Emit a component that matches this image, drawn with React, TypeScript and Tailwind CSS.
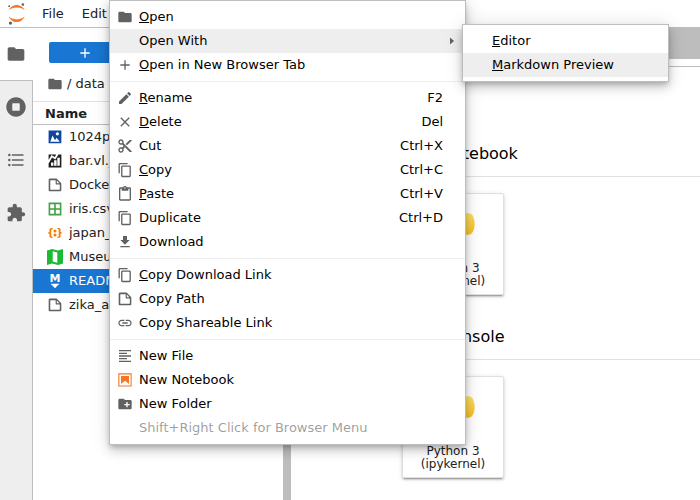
import type { ReactNode } from 'react';

const paths = {
  folder: 'M10 4H4c-1.1 0-1.99.9-1.99 2L2 18c0 1.1.9 2 2 2h16c1.1 0 2-.9 2-2V8c0-1.1-.9-2-2-2h-8l-2-2z',
  add: 'M19 13h-6v6h-2v-6H5v-2h6V5h2v6h6v2z',
  edit: 'M3 17.25V21h3.75L17.81 9.94l-3.75-3.75L3 17.25zM20.71 7.04c.39-.39.39-1.02 0-1.41l-2.34-2.34c-.39-.39-1.02-.39-1.41 0l-1.83 1.83 3.75 3.75 1.83-1.83z',
  close: 'M19 6.41L17.59 5 12 10.59 6.41 5 5 6.41 10.59 12 5 17.59 6.41 19 12 13.41 17.59 19 19 17.59 13.41 12z',
  cut: 'M9.64 7.64c.23-.5.36-1.05.36-1.64 0-2.21-1.79-4-4-4S2 3.79 2 6s1.79 4 4 4c.59 0 1.14-.13 1.64-.36L10 12l-2.36 2.36C7.14 14.13 6.59 14 6 14c-2.21 0-4 1.79-4 4s1.79 4 4 4 4-1.79 4-4c0-.59-.13-1.14-.36-1.64L12 14l7 7h3v-1L9.64 7.64zM6 8c-1.1 0-2-.89-2-2s.9-2 2-2 2 .89 2 2-.9 2-2 2zm0 12c-1.1 0-2-.89-2-2s.9-2 2-2 2 .89 2 2-.9 2-2 2zm6-7.5c-.28 0-.5-.22-.5-.5s.22-.5.5-.5.5.22.5.5-.22.5-.5.5zM19 3l-6 6 2 2 7-7V3z',
  copy: 'M11.9,1H3.2C2.4,1,1.7,1.7,1.7,2.5v10.2h1.5V2.5h8.7V1z M14.1,3.9h-8c-0.8,0-1.5,0.7-1.5,1.5v10.2c0,0.8,0.7,1.5,1.5,1.5h8c0.8,0,1.5-0.7,1.5-1.5V5.4C15.5,4.6,14.9,3.9,14.1,3.9z M14.1,15.5h-8V5.4h8V15.5z',
  paste: 'M19 2h-4.18C14.4.84 13.3 0 12 0c-1.3 0-2.4.84-2.82 2H5c-1.1 0-2 .9-2 2v16c0 1.1.9 2 2 2h14c1.1 0 2-.9 2-2V4c0-1.1-.9-2-2-2zm-7 0c.55 0 1 .45 1 1s-.45 1-1 1-1-.45-1-1 .45-1 1-1zm7 18H5V4h2v3h10V4h2v16z',
  download: 'M19 9h-4V3H9v6H5l7 7 7-7zM5 18v2h14v-2H5z',
  link: 'M3.9 12c0-1.71 1.39-3.1 3.1-3.1h4V7H7c-2.76 0-5 2.24-5 5s2.24 5 5 5h4v-1.9H7c-1.71 0-3.1-1.39-3.1-3.1zM8 13h8v-2H8v2zm9-6h-4v1.9h4c1.71 0 3.1 1.39 3.1 3.1s-1.39 3.1-3.1 3.1h-4V17h4c2.76 0 5-2.24 5-5s-2.24-5-5-5z',
  lines: 'M15 15H3v2h12v-2zm0-8H3v2h12V7zM3 13h18v-2H3v2zm0 8h18v-2H3v2zM3 3v2h18V3H3z',
  newFolder: 'M20 6h-8l-2-2H4c-1.11 0-1.99.89-1.99 2L2 18c0 1.11.89 2 2 2h16c1.11 0 2-.89 2-2V8c0-1.11-.89-2-2-2zm-1 8h-3v3h-2v-3h-3v-2h3V9h2v3h3v2z',
  running: 'M256 8C119 8 8 119 8 256s111 248 248 248 248-111 248-248S393 8 256 8zm96 328c0 8.8-7.2 16-16 16H176c-8.8 0-16-7.2-16-16V176c0-8.8 7.2-16 16-16h160c8.8 0 16 7.2 16 16v160z',
  toc: 'M7,5H21V7H7V5M7,13V11H21V13H7M4,4.5A1.5,1.5 0 0,1 5.5,6A1.5,1.5 0 0,1 4,7.5A1.5,1.5 0 0,1 2.5,6A1.5,1.5 0 0,1 4,4.5M4,10.5A1.5,1.5 0 0,1 5.5,12A1.5,1.5 0 0,1 4,13.5A1.5,1.5 0 0,1 2.5,12A1.5,1.5 0 0,1 4,10.5M7,19V17H21V19H7M4,16.5A1.5,1.5 0 0,1 5.5,18A1.5,1.5 0 0,1 4,19.5A1.5,1.5 0 0,1 2.5,18A1.5,1.5 0 0,1 4,16.5Z',
  extension: 'M20.5 11H19V7c0-1.1-.9-2-2-2h-4V3.5C13 2.12 11.88 1 10.5 1S8 2.12 8 3.5V5H4c-1.1 0-1.99.9-1.99 2v3.8H3.5c1.49 0 2.7 1.21 2.7 2.7s-1.21 2.7-2.7 2.7H2V20c0 1.1.9 2 2 2h3.8v-1.5c0-1.49 1.21-2.7 2.7-2.7 1.49 0 2.7 1.21 2.7 2.7V22H17c1.1 0 2-.9 2-2v-4h1.5c1.38 0 2.5-1.12 2.5-2.5S21.88 11 20.5 11z',
  file: 'M19.3 8.2l-5.5-5.5c-.3-.3-.7-.5-1.2-.5H3.9c-.8.1-1.6.9-1.6 1.8v14.1c0 .9.7 1.6 1.6 1.6h14.2c.9 0 1.6-.7 1.6-1.6V9.4c.1-.5-.1-.9-.4-1.2zm-5.8-3.3l3.4 3.6h-3.4V4.9zm3.9 12.7H4.7c-.1 0-.2 0-.2-.2V4.7c0-.2.1-.3.2-.3h7.2v4.4s0 .8.3 1.1c.3.3 1.1.3 1.1.3h4.3v7.2s-.1.2-.2.2z',
  image: 'M2.2 2.2v17.5h17.5l.1-17.5H2.2zm12.1 2.2c1.2 0 2.2 1 2.2 2.2s-1 2.2-2.2 2.2-2.2-1-2.2-2.2 1-2.2 2.2-2.2zM4.4 17.6l3.3-8.8 3.3 6.6 2.2-3.2 4.4 5.4H4.4z',
  chart: 'M10.6 5.4l2.2-3.2H2.2v7.3l4-6.6zM15.8 2.2l-4.4 6.6L7 6.3l-4.8 8v5.5h17.6V2.2h-4zm-7 15.4H5.5v-4.4h3.3v4.4zm4.4 0H9.8V9.8h3.4v7.8zm4.4 0h-3.4V6.5h3.4v11.1z',
  sheet: 'M2.2 2.2v17.6h17.6V2.2H2.2zm15.4 7.7h-5.5V4.4h5.5v5.5zM9.9 4.4v5.5H4.4V4.4h5.5zm-5.5 7.7h5.5v5.5H4.4v-5.5zm7.7 5.5v-5.5h5.5v5.5h-5.5z',
  json: 'M20.2 11.8c-1.6 0-1.7.5-1.7 1 0 .4.1.9.1 1.3.1.5.1.9.1 1.3 0 1.7-1.4 2.3-3.5 2.3h-.9v-1.9h.5c1.1 0 1.4 0 1.4-.8 0-.3 0-.6-.1-1 0-.4-.1-.8-.1-1.2 0-1.3 0-1.8 1.3-2-1.3-.2-1.3-.7-1.3-2 0-.4.1-.8.1-1.2.1-.4.1-.7.1-1 0-.8-.4-.7-1.4-.8h-.5V4.1h.9c2.2 0 3.5.7 3.5 2.3 0 .4-.1.9-.1 1.3-.1.5-.1.9-.1 1.3 0 .5.2 1 1.7 1v1.8zM1.8 10.1c1.6 0 1.7-.5 1.7-1 0-.4-.1-.9-.1-1.3-.1-.5-.1-.9-.1-1.3 0-1.6 1.4-2.3 3.5-2.3h.9v1.9h-.5c-1 0-1.4 0-1.4.8 0 .3 0 .6.1 1 0 .2.1.6.1 1 0 1.3 0 1.8-1.3 2C6 11.2 6 11.7 6 13c0 .4-.1.8-.1 1.2-.1.3-.1.7-.1 1 0 .8.3.8 1.4.8h.5v1.9h-.9c-2.1 0-3.5-.6-3.5-2.3 0-.4.1-.9.1-1.3.1-.5.1-.9.1-1.3 0-.5-.2-1-1.7-1v-1.9zM8.9 13.8a2.1 2.1 0 1 0 4.2 0a2.1 2.1 0 1 0-4.2 0zM8.9 8.2a2.1 2.1 0 1 0 4.2 0a2.1 2.1 0 1 0-4.2 0z',
};

type IconName = keyof typeof paths;

const viewBoxes: Partial<Record<IconName, string>> = {
  copy: '0 0 18 18',
  running: '0 0 512 512',
  file: '0 0 22 22',
  image: '0 0 22 22',
  chart: '0 0 22 22',
  sheet: '0 0 22 22',
  json: '0 0 22 22',
};

function Icon({ name, className = 'size-4 fill-[#616161]' }: { name: IconName; className?: string }) {
  return (
    <svg className={`shrink-0 ${className}`} viewBox={viewBoxes[name] ?? '0 0 24 24'} aria-hidden="true">
      <path d={paths[name]} />
    </svg>
  );
}

function NotebookIcon({ className = 'size-4' }: { className?: string }) {
  return (
    <svg className={`shrink-0 fill-[#f37726] ${className}`} viewBox="0 0 22 22" aria-hidden="true">
      <path d="M18.7 3.3v15.4H3.3V3.3h15.4m1.5-1.5H1.8v18.3h18.3l.1-18.3z" />
      <path d="M16.5 16.5l-5.4-4.3-5.6 4.3v-11h11z" />
    </svg>
  );
}

function MapIcon() {
  return (
    <svg className="size-4 shrink-0 fill-[#1bb934]" viewBox="0 0 16 16" aria-hidden="true">
      <path d="M0 1.6L5 0v14.4L0 16zM11 1.6L16 0v14.4L11 16z" />
      <path d="M5 0L11 1.6V16L5 14.4z" />
      <path className="fill-white" d="M5.7 2.2L10.3 3.5V13.8L5.7 12.5z" />
    </svg>
  );
}

function MarkdownIcon() {
  return (
    <svg className="size-4 shrink-0 fill-white" viewBox="0 0 16 16" aria-hidden="true">
      <text x="8" y="9" textAnchor="middle" className="font-['DejaVu_Sans'] text-[11px] font-bold">M</text>
      <path d="M3.6 10.8h8.8L8 15.2z" />
    </svg>
  );
}

function JupyterLogo() {
  return (
    <svg className="h-[22px] w-[17px] shrink-0 fill-[#616161]" viewBox="0 0 39 51" aria-hidden="true">
      <g className="fill-[#f37726]">
        <path transform="translate(1.7 31)" d="M18.26 7.13C10.41 7.13 3.56 4.26 0 0c1.33 3.82 3.8 7.13 7.07 9.47 3.27 2.35 7.19 3.6 11.2 3.6s7.93-1.25 11.2-3.6C32.74 7.13 35.21 3.82 36.54 0c-3.57 4.26-10.43 7.13-18.28 7.13z" />
        <path transform="translate(1.7 4.5)" d="M18.27 5.94c7.85 0 14.71 2.88 18.27 7.13-1.33-3.82-3.8-7.13-7.07-9.47C26.2 1.26 22.28 0 18.27 0S10.34 1.26 7.07 3.6C3.8 5.94 1.33 9.25 0 13.07c3.57-4.25 10.42-7.13 18.27-7.13z" />
      </g>
      <circle cx="34.3" cy="3.3" r="3" />
      <circle cx="5.5" cy="46.6" r="3.8" />
      <circle cx="2.5" cy="7.3" r="2.2" />
    </svg>
  );
}

function PythonLogo() {
  return (
    <svg className="size-11" viewBox="0 0 112 112" aria-hidden="true">
      <defs>
        <linearGradient id="pyYellow" x1="0.5" y1="0" x2="0.8" y2="0.6">
          <stop offset="0" stopColor="#ffe873" />
          <stop offset="1" stopColor="#f9c32e" />
        </linearGradient>
      </defs>
      <path fill="#3670a0" d="M54.92 0C50.34.02 45.96.41 42.11 1.09 30.76 3.1 28.7 7.29 28.7 15.03v10.22h26.81v3.41H18.64c-7.79 0-14.62 4.68-16.75 13.59-2.46 10.21-2.57 16.59 0 27.25 1.9 7.94 6.46 13.59 14.25 13.59h9.22v-12.25c0-8.85 7.65-16.65 16.75-16.65h26.78c7.45 0 13.4-6.14 13.4-13.63V15.03c0-7.27-6.13-12.72-13.4-13.94C64.28.33 59.5-.02 54.92 0zm-14.5 8.22c2.77 0 5.03 2.3 5.03 5.12s-2.26 5.1-5.03 5.1c-2.78 0-5.03-2.28-5.03-5.1s2.25-5.12 5.03-5.12z" />
      <path fill="url(#pyYellow)" d="M85.64 28.66v11.9c0 9.23-7.83 17-16.75 17H42.11c-7.34 0-13.41 6.28-13.41 13.63v25.53c0 7.27 6.32 11.54 13.41 13.62 8.48 2.5 16.62 2.95 26.78 0 6.75-1.95 13.4-5.88 13.4-13.62V86.5H55.51v-3.41h40.19c7.79 0 10.7-5.43 13.4-13.59 2.8-8.4 2.68-16.48 0-27.25-1.92-7.76-5.6-13.59-13.4-13.59zM70.57 93.31c2.78 0 5.04 2.28 5.04 5.1s-2.26 5.12-5.04 5.12c-2.77 0-5.03-2.3-5.03-5.12s2.26-5.1 5.03-5.1z" />
    </svg>
  );
}

interface FileEntry {
  name: string;
  icon: ReactNode;
  selected?: boolean;
}

const files: FileEntry[] = [
  { name: '1024px-Hubble_Galaxy.jpg', icon: <Icon name="image" className="size-4 fill-[#0d47a1]" /> },
  { name: 'bar.vl.json', icon: <Icon name="chart" className="size-4 fill-[#212121]" /> },
  { name: 'Dockerfile', icon: <Icon name="file" /> },
  { name: 'iris.csv', icon: <Icon name="sheet" className="size-4 fill-[#43a047]" /> },
  { name: 'japan_meterological.json', icon: <Icon name="json" className="size-4 fill-[#f57c00]" /> },
  { name: 'Museums_in_DC.geojson', icon: <MapIcon /> },
  { name: 'README.md', icon: <MarkdownIcon />, selected: true },
  { name: 'zika_assembled.fasta', icon: <Icon name="file" /> },
];

interface MenuEntry {
  label: string;
  icon?: ReactNode;
  mnemonic?: boolean;
  shortcut?: string;
  submenu?: boolean;
  active?: boolean;
  disabled?: boolean;
}

const menuGroups: MenuEntry[][] = [
  [
    { label: 'Open', icon: <Icon name="folder" />, mnemonic: true },
    { label: 'Open With', submenu: true, active: true },
    { label: 'Open in New Browser Tab', icon: <Icon name="add" />, mnemonic: true },
  ],
  [
    { label: 'Rename', icon: <Icon name="edit" />, mnemonic: true, shortcut: 'F2' },
    { label: 'Delete', icon: <Icon name="close" />, mnemonic: true, shortcut: 'Del' },
    { label: 'Cut', icon: <Icon name="cut" />, shortcut: 'Ctrl+X' },
    { label: 'Copy', icon: <Icon name="copy" />, mnemonic: true, shortcut: 'Ctrl+C' },
    { label: 'Paste', icon: <Icon name="paste" />, mnemonic: true, shortcut: 'Ctrl+V' },
    { label: 'Duplicate', icon: <Icon name="copy" />, shortcut: 'Ctrl+D' },
    { label: 'Download', icon: <Icon name="download" /> },
  ],
  [
    { label: 'Copy Download Link', icon: <Icon name="copy" />, mnemonic: true },
    { label: 'Copy Path', icon: <Icon name="file" /> },
    { label: 'Copy Shareable Link', icon: <Icon name="link" /> },
  ],
  [
    { label: 'New File', icon: <Icon name="lines" /> },
    { label: 'New Notebook', icon: <NotebookIcon /> },
    { label: 'New Folder', icon: <Icon name="newFolder" /> },
    { label: 'Shift+Right Click for Browser Menu', disabled: true },
  ],
];

const openWithGroups: MenuEntry[][] = [
  [
    { label: 'Editor', mnemonic: true },
    { label: 'Markdown Preview', mnemonic: true, active: true },
  ],
];

function MenuItem({ item }: { item: MenuEntry }) {
  return (
    <button
      type="button"
      role="menuitem"
      disabled={item.disabled}
      aria-haspopup={item.submenu ? 'menu' : undefined}
      className={`flex h-6 w-full items-center pr-[11px] pl-[7px] text-left ${item.active ? 'bg-[#eeeeee]' : ''} ${item.disabled ? 'text-black/40' : 'text-black'}`}
    >
      <span className="mr-1.5 size-4 shrink-0">{item.icon}</span>
      <span className="flex-1 whitespace-nowrap">
        {item.mnemonic ? (
          <>
            <span className="underline">{item.label[0]}</span>
            {item.label.slice(1)}
          </>
        ) : (
          item.label
        )}
      </span>
      <span className="mr-1.5">{item.shortcut}</span>
      <span className="flex w-[5px] justify-end">
        {item.submenu && (
          <svg className="h-2 w-1 fill-[#616161]" viewBox="0 0 4 8" aria-hidden="true">
            <path d="M0 0.5L4 4L0 7.5z" />
          </svg>
        )}
      </span>
    </button>
  );
}

function Menu({ groups, label, className }: { groups: MenuEntry[][]; label: string; className: string }) {
  return (
    <div
      role="menu"
      aria-label={label}
      className={`absolute border border-[#bdbdbd] bg-white py-1 shadow-[0_3px_5px_-1px_rgba(0,0,0,0.2),0_6px_10px_0_rgba(0,0,0,0.14),0_1px_18px_0_rgba(0,0,0,0.12)] ${className}`}
    >
      {groups.map((group, i) => (
        <div key={i}>
          {i > 0 && <div className="my-1 h-px bg-[#eeeeee]" />}
          {group.map((item) => (
            <MenuItem key={item.label} item={item} />
          ))}
        </div>
      ))}
    </div>
  );
}

function LauncherSection({ title, icon }: { title: string; icon: ReactNode }) {
  return (
    <section className="pb-[17px]">
      <div className="mb-4 flex h-12 items-center gap-2 border-b border-[#e0e0e0] pt-0.5">
        {icon}
        <h2 className="text-base text-black">{title}</h2>
      </div>
      <button
        type="button"
        className="ml-px flex size-[102px] flex-col items-center rounded-xs border border-[#e0e0e0] bg-white pt-2 text-[12px] leading-[13px] text-[#212121] shadow-[0_3px_1px_-2px_rgba(0,0,0,0.2),0_2px_2px_0_rgba(0,0,0,0.14),0_1px_5px_0_rgba(0,0,0,0.12)]"
      >
        <PythonLogo />
        <span className="mt-4">Python 3 (ipykernel)</span>
      </button>
    </section>
  );
}

export default function App() {
  return (
    <div className="relative flex h-screen flex-col overflow-hidden bg-white font-['DejaVu_Sans',sans-serif] text-[13px] text-[#212121]">
      <header className="flex h-7 shrink-0 items-center border-b border-[#bdbdbd] pl-2">
        <JupyterLogo />
        <nav className="ml-2 flex">
          {['File', 'Edit', 'View', 'Run', 'Kernel', 'Tabs', 'Settings', 'Help'].map((name) => (
            <button key={name} type="button" className="px-[9px]">
              {name}
            </button>
          ))}
        </nav>
      </header>

      <div className="flex min-h-0 flex-1">
        {/* Activity bar */}
        <div className="flex w-[33px] shrink-0 flex-col">
          <button type="button" aria-label="File Browser" className="flex h-[52px] w-full items-center justify-center pr-px">
            <Icon name="folder" className="size-5 fill-[#616161]" />
          </button>
          <div className="flex flex-1 flex-col border-t border-r border-[#bdbdbd] bg-[#eeeeee]">
            <button type="button" aria-label="Running Terminals and Kernels" className="flex h-[52px] items-center justify-center">
              <Icon name="running" className="size-5 fill-[#616161]" />
            </button>
            <button type="button" aria-label="Table of Contents" className="flex h-[53px] items-center justify-center">
              <Icon name="toc" className="size-5 fill-[#616161]" />
            </button>
            <button type="button" aria-label="Extension Manager" className="flex h-[53px] items-center justify-center">
              <Icon name="extension" className="size-5 fill-[#616161]" />
            </button>
          </div>
        </div>

        {/* File browser */}
        <aside className="flex w-[250px] shrink-0 flex-col">
          <div className="px-4 pt-[14px]">
            <button type="button" aria-label="New Launcher" className="flex h-[21px] w-[72px] items-center justify-center rounded-xs bg-[#1976d2]">
              <Icon name="add" className="size-4 fill-white" />
            </button>
          </div>
          <div className="flex h-[38px] items-center gap-1 pt-[3px] pl-[14px]">
            <Icon name="folder" />
            <span>/ data /</span>
          </div>
          <div className="flex h-6 items-center border-t border-b border-t-[#e0e0e0] border-b-[#bdbdbd] pt-0.5 pl-3 font-bold">Name</div>
          <ul>
            {files.map((file) => (
              <li
                key={file.name}
                className={`flex h-6 items-center gap-1.5 pr-3 pl-[14px] ${file.selected ? 'bg-[#1976d2] text-white' : ''}`}
              >
                {file.icon}
                <span className="truncate">{file.name}</span>
              </li>
            ))}
          </ul>
        </aside>
        <div className="w-2 shrink-0 bg-[#bdbdbd]" />

        {/* Launcher */}
        <main className="min-w-0 flex-1">
          <div className="h-[31px] bg-[#bdbdbd]" />
          <div className="h-2 border-b border-[#bdbdbd]" />
          <div className="pt-[62px] pl-[110px]">
            <LauncherSection title="Notebook" icon={<NotebookIcon className="size-8" />} />
            <LauncherSection
              title="Console"
              icon={
                <svg className="size-8 shrink-0" viewBox="0 0 32 32" aria-hidden="true">
                  <rect x="3" y="3" width="26" height="26" className="fill-[#0288d1]" />
                  <path d="M8 10l5 5-5 5M16 21h8" className="fill-none stroke-white stroke-2" />
                </svg>
              }
            />
          </div>
        </main>
      </div>

      <Menu groups={menuGroups} label="File actions" className="top-0 left-[109px] w-[357px]" />
      <Menu groups={openWithGroups} label="Open With" className="top-6 left-[462px] w-[207px]" />
    </div>
  );
}
